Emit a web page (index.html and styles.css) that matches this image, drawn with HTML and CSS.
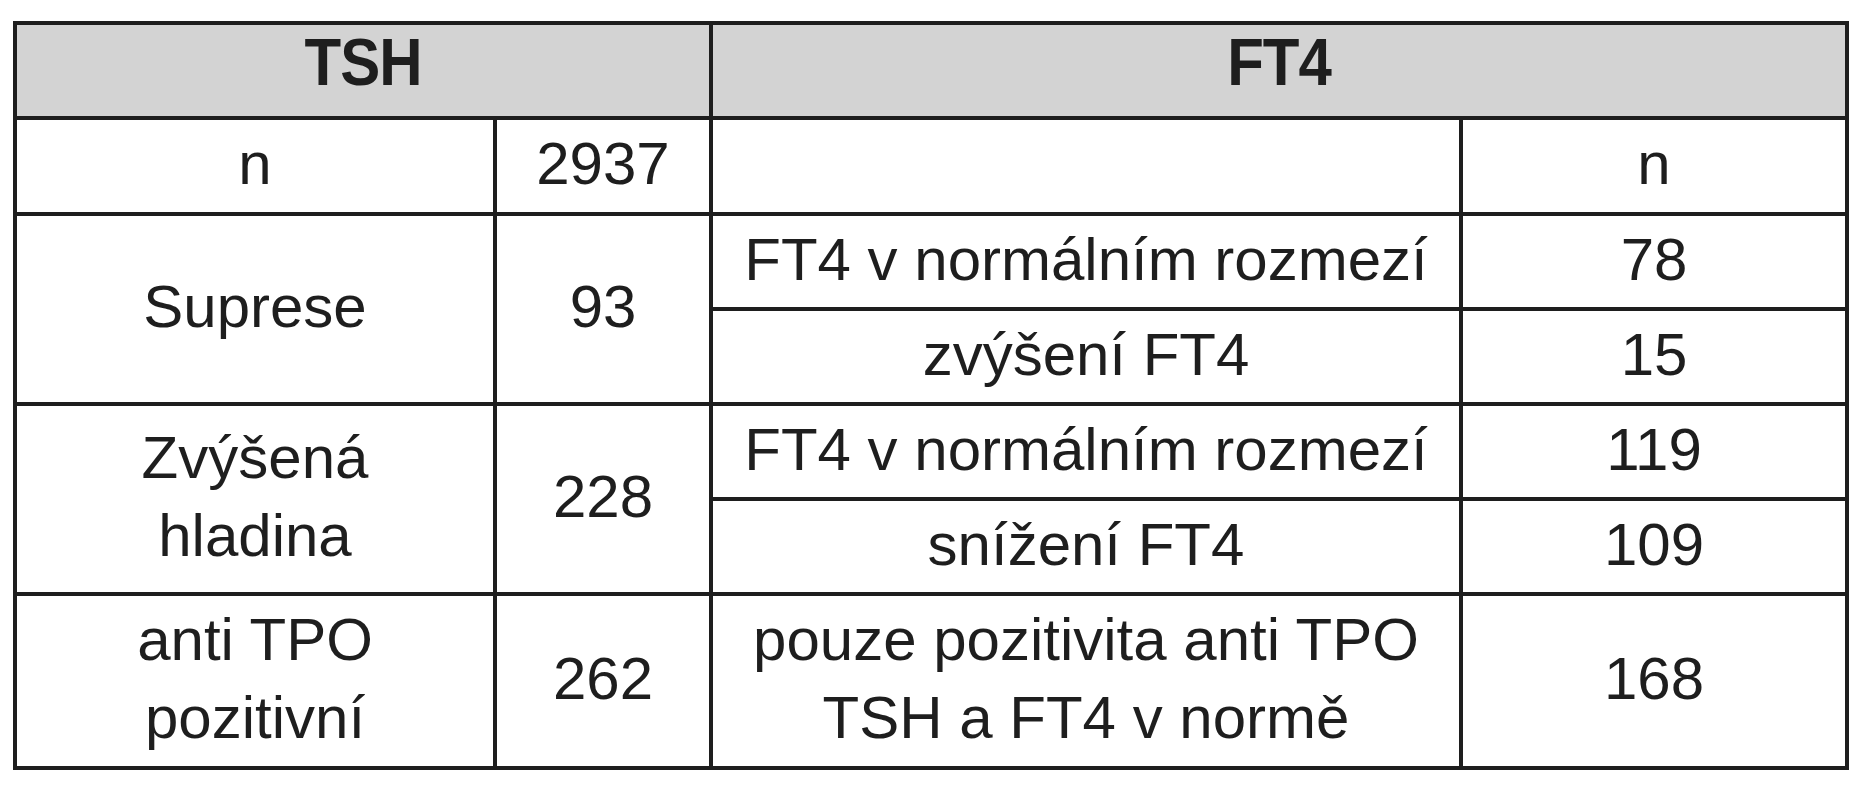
FILE: index.html
```html
<!DOCTYPE html>
<html lang="cs">
<head>
<meta charset="utf-8">
<title>TSH a FT4</title>
<link rel="stylesheet" href="styles.css">
</head>
<body>
<table class="data">
  <colgroup>
    <col class="c1">
    <col class="c2">
    <col class="c3">
    <col class="c4">
  </colgroup>
  <tr class="head">
    <th colspan="2"><span class="tall">TSH</span></th>
    <th colspan="2"><span class="tall">FT4</span></th>
  </tr>
  <tr class="r-n">
    <td>n</td>
    <td>2937</td>
    <td></td>
    <td>n</td>
  </tr>
  <tr class="r-a">
    <td rowspan="2">Suprese</td>
    <td rowspan="2">93</td>
    <td>FT4 v normálním rozmezí</td>
    <td>78</td>
  </tr>
  <tr class="r-b">
    <td>zvýšení FT4</td>
    <td>15</td>
  </tr>
  <tr class="r-a">
    <td rowspan="2" class="two">Zvýšená<br>hladina</td>
    <td rowspan="2">228</td>
    <td>FT4 v normálním rozmezí</td>
    <td>119</td>
  </tr>
  <tr class="r-b">
    <td>snížení FT4</td>
    <td>109</td>
  </tr>
  <tr class="r-last">
    <td class="two">anti TPO<br>pozitivní</td>
    <td>262</td>
    <td class="two">pouze pozitivita anti TPO<br>TSH a FT4 v normě</td>
    <td>168</td>
  </tr>
</table>
</body>
</html>
```

FILE: styles.css
```css
html, body {
  margin: 0;
  padding: 0;
  background: #ffffff;
}

body {
  padding: 21px 0 0 13px;
  font-family: "Liberation Sans", Arial, sans-serif;
  color: #1e1e1e;
}

.data {
  border-collapse: separate;
  border-spacing: 0;
  table-layout: fixed;
  width: 1836px;
  border-left: 4px solid #1e1e1e;
  border-top: 4px solid #1e1e1e;
}

.c1 { width: 480px; }
.c2 { width: 216px; }
.c3 { width: 750px; }
.c4 { width: 386px; }

.data th,
.data td {
  box-sizing: border-box;
  padding: 0 0 5px 0;
  border-right: 4px solid #1e1e1e;
  border-bottom: 4px solid #1e1e1e;
  text-align: center;
  vertical-align: middle;
  font-size: 60px;
  line-height: 1.15;
  font-weight: normal;
  color: #1e1e1e;
}

.data th {
  background: #d3d3d3;
  font-weight: bold;
  letter-spacing: -1px;
  padding-bottom: 17px;
}

.tall {
  display: inline-block;
  transform: scaleY(1.11);
}

.data td.two {
  line-height: 78px;
}

.head { height: 95px; }
.r-n { height: 96px; }
.r-a { height: 95px; }
.r-b { height: 95px; }
.r-last { height: 174px; }
```
